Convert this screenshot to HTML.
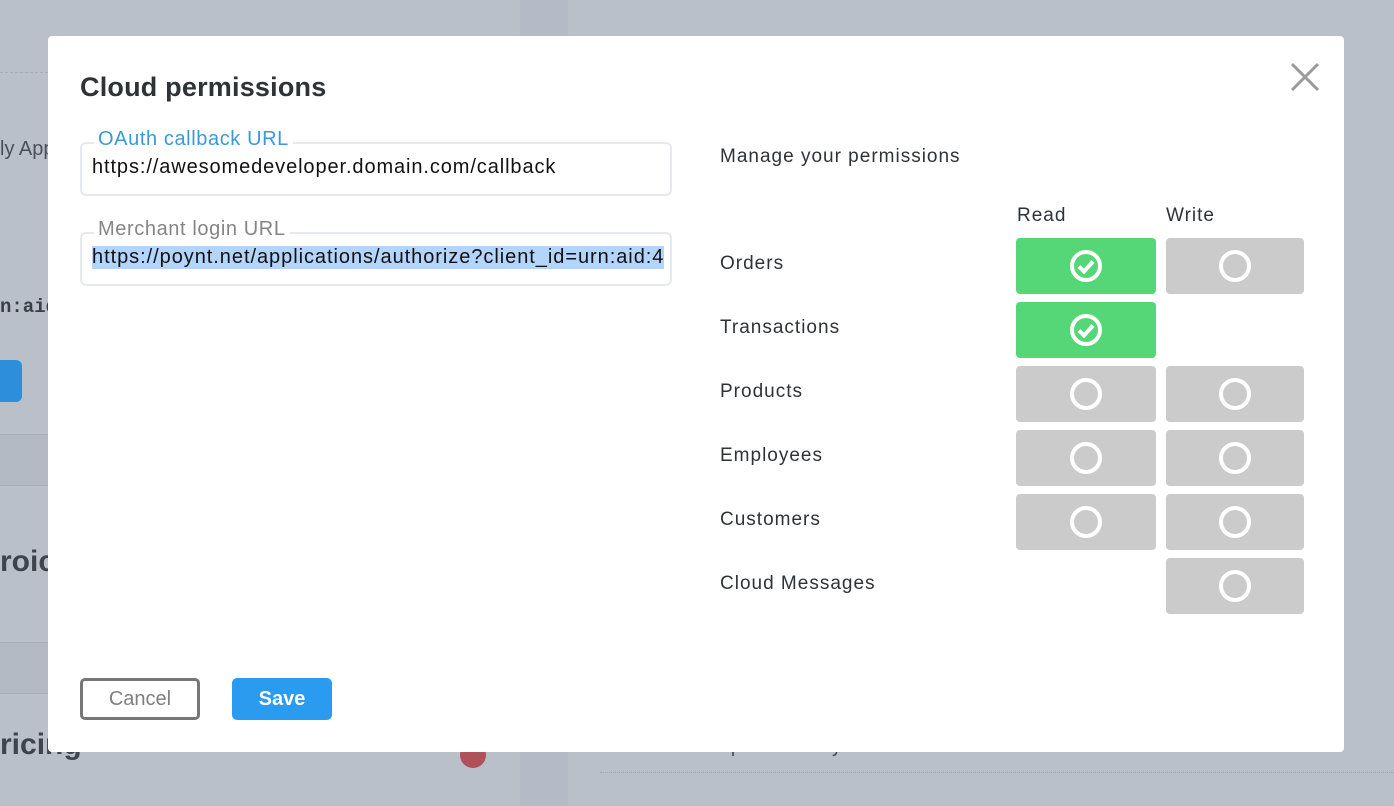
<!DOCTYPE html>
<html><head><meta charset="utf-8"><style>
body{margin:0;width:1394px;height:806px;background:#b9c0ca;position:relative;overflow:hidden;font-family:"Liberation Sans",sans-serif;}
.abs{position:absolute}
.modal{position:absolute;left:48px;top:36px;width:1296px;height:716px;background:#fff;border-radius:4px}
h1{position:absolute;left:32px;top:36px;margin:0;font-size:27px;font-weight:bold;color:#2e3338;letter-spacing:0.2px}
.field{position:absolute;left:32px;width:588px;height:50px;border:2px solid #e6e9ee;border-radius:6px}
.field .lab{position:absolute;left:12px;top:-16px;background:#fff;padding:0 4px;font-size:20px;letter-spacing:0.6px}
.field .val{position:absolute;left:10px;top:12px;font-size:20px;color:#111;white-space:nowrap;letter-spacing:0.9px}
.lbl{position:absolute;left:672px;font-size:19px;color:#2e3338;letter-spacing:1px}
.b{position:absolute;width:140px;height:56px;border-radius:4px;background:#cbcbcb}
.b.w{width:138px}
.b.g{background:#55d777}
.b svg{position:absolute;left:52px;top:10px}
.b.w svg{left:51px}
</style></head><body>
<div class="abs" style="left:520px;top:0;width:48px;height:806px;background:#b4bbc6"></div>
<div class="abs" style="left:0;top:72px;width:48px;border-top:1px dashed #a5acb7"></div>
<div class="abs" style="left:0;top:138px;font-size:20px;color:#4a5059">ly App</div>
<div class="abs" style="left:0;top:296px;font-size:19px;font-family:'Liberation Mono';color:#3a3f45;font-weight:bold">n:aid</div>
<div class="abs" style="left:0;top:360px;width:22px;height:42px;background:#2d8fdc;border-radius:0 6px 6px 0"></div>
<div class="abs" style="left:0;top:434px;width:48px;height:50px;background:#b3bac4;border-top:1px solid #a8afb9;border-bottom:1px solid #a8afb9"></div>
<div class="abs" style="left:0;top:545px;font-size:30px;font-weight:bold;color:#3e444b">roic</div>
<div class="abs" style="left:0;top:642px;width:48px;height:50px;background:#b3bac4;border-top:1px solid #a8afb9;border-bottom:1px solid #a8afb9"></div>
<div class="abs" style="left:0;top:728px;font-size:30px;font-weight:bold;color:#3e444b">ricing</div>
<div class="abs" style="left:460px;top:742px;width:26px;height:26px;border-radius:50%;background:#b0505a"></div>
<div class="abs" style="left:632px;top:736px;font-size:18px;color:#3e444b">Activate the permissions you want to use</div>
<div class="abs" style="left:600px;top:772px;width:794px;border-top:1px dotted #a0a7b1"></div>
<div class="modal">
<h1>Cloud permissions</h1>
<svg style="position:absolute;right:24px;top:26px" width="30" height="30" viewBox="0 0 30 30"><path d="M2 2L28 28M28 2L2 28" stroke="#9a9a9a" stroke-width="3"/></svg>
<div class="field" style="top:106px"><span class="lab" style="color:#3a9ad9">OAuth callback URL</span><span class="val">https://awesomedeveloper.domain.com/callback</span></div>
<div class="field" style="top:196px"><span class="lab" style="color:#858585">Merchant login URL</span><span class="val" style="background:#b4d5fb;top:12px;letter-spacing:0.95px">https://poynt.net/applications/authorize?client_id=urn:aid:4</span></div>
<div class="lbl" style="top:110px">Manage your permissions</div>
<div class="lbl" style="left:969px;top:169px">Read</div>
<div class="lbl" style="left:1118px;top:169px">Write</div>
<div class="lbl" style="top:217px">Orders</div>
<div class="lbl" style="top:281px">Transactions</div>
<div class="lbl" style="top:345px">Products</div>
<div class="lbl" style="top:409px">Employees</div>
<div class="lbl" style="top:473px">Customers</div>
<div class="lbl" style="top:537px">Cloud Messages</div>
<div style="position:absolute;left:32px;top:642px;width:114px;height:36px;border:3px solid #777;border-radius:5px;font-size:20px;color:#808080;text-align:center;line-height:36px">Cancel</div>
<div style="position:absolute;left:184px;top:642px;width:100px;height:42px;background:#2b9bf0;border-radius:5px;font-size:20px;color:#fff;font-weight:bold;text-align:center;line-height:42px">Save</div>
</div>
<div class="abs" style="left:0;top:0">
<div class="b g" style="left:1016px;top:238px"><svg width="36" height="36" viewBox="0 0 36 36"><circle cx="18" cy="18" r="14" fill="none" stroke="#fff" stroke-width="4"/><path d="M11 18.5l5 5 9-10" fill="none" stroke="#fff" stroke-width="4"/></svg></div>
<div class="b w" style="left:1166px;top:238px"><svg width="36" height="36" viewBox="0 0 36 36"><circle cx="18" cy="18" r="14" fill="none" stroke="#fff" stroke-width="4"/></svg></div>
<div class="b g" style="left:1016px;top:302px"><svg width="36" height="36" viewBox="0 0 36 36"><circle cx="18" cy="18" r="14" fill="none" stroke="#fff" stroke-width="4"/><path d="M11 18.5l5 5 9-10" fill="none" stroke="#fff" stroke-width="4"/></svg></div>
<div class="b" style="left:1016px;top:366px"><svg width="36" height="36" viewBox="0 0 36 36"><circle cx="18" cy="18" r="14" fill="none" stroke="#fff" stroke-width="4"/></svg></div>
<div class="b w" style="left:1166px;top:366px"><svg width="36" height="36" viewBox="0 0 36 36"><circle cx="18" cy="18" r="14" fill="none" stroke="#fff" stroke-width="4"/></svg></div>
<div class="b" style="left:1016px;top:430px"><svg width="36" height="36" viewBox="0 0 36 36"><circle cx="18" cy="18" r="14" fill="none" stroke="#fff" stroke-width="4"/></svg></div>
<div class="b w" style="left:1166px;top:430px"><svg width="36" height="36" viewBox="0 0 36 36"><circle cx="18" cy="18" r="14" fill="none" stroke="#fff" stroke-width="4"/></svg></div>
<div class="b" style="left:1016px;top:494px"><svg width="36" height="36" viewBox="0 0 36 36"><circle cx="18" cy="18" r="14" fill="none" stroke="#fff" stroke-width="4"/></svg></div>
<div class="b w" style="left:1166px;top:494px"><svg width="36" height="36" viewBox="0 0 36 36"><circle cx="18" cy="18" r="14" fill="none" stroke="#fff" stroke-width="4"/></svg></div>
<div class="b w" style="left:1166px;top:558px"><svg width="36" height="36" viewBox="0 0 36 36"><circle cx="18" cy="18" r="14" fill="none" stroke="#fff" stroke-width="4"/></svg></div>
</div>
</body></html>
